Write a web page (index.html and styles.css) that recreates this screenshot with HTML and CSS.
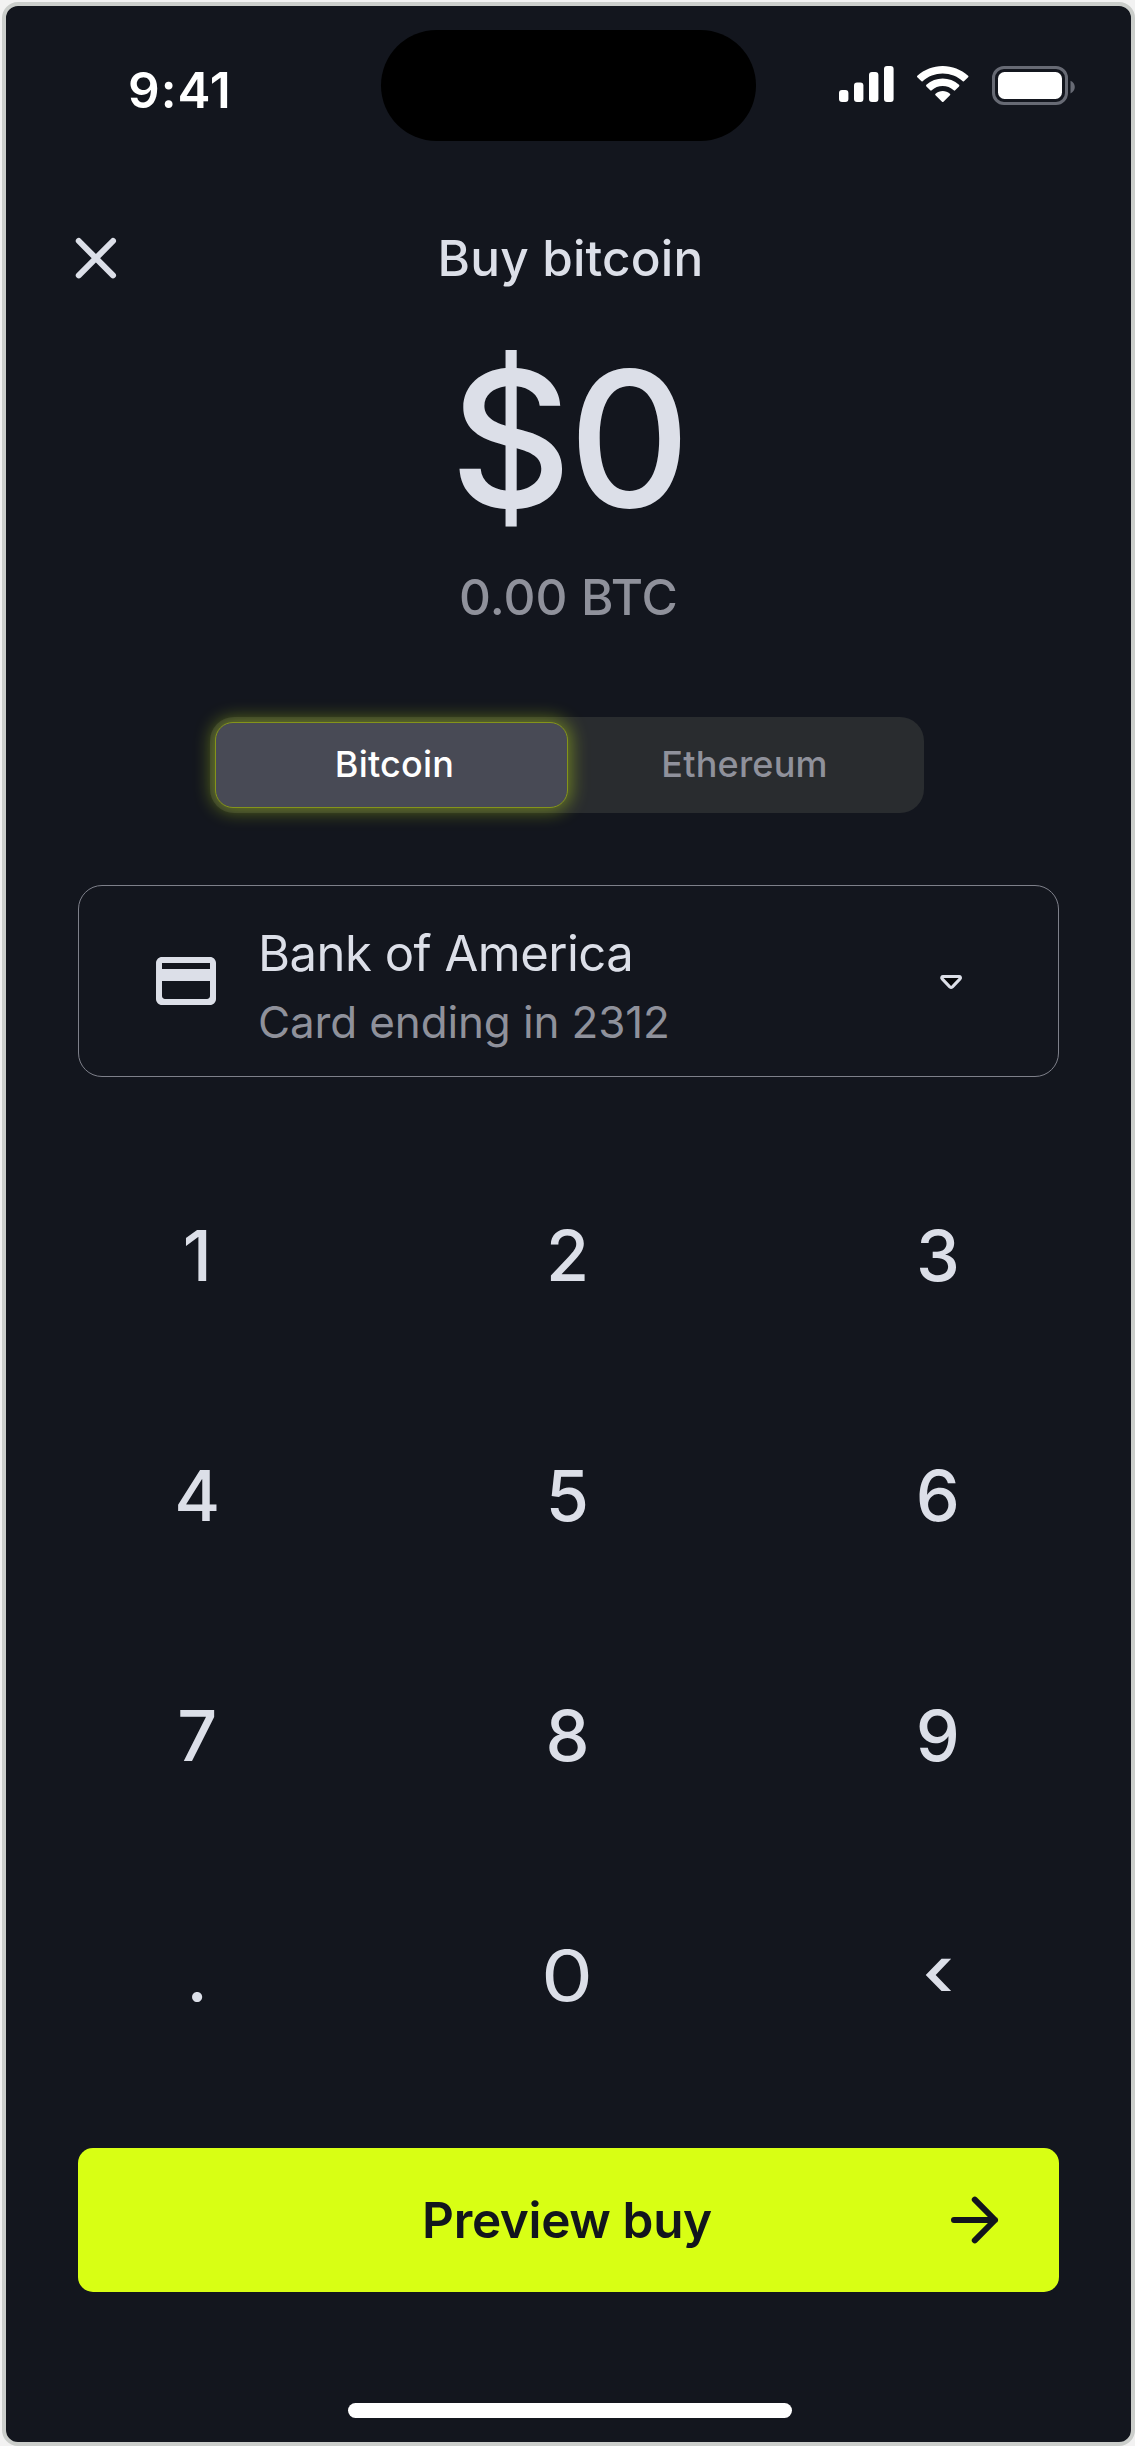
FILE: index.html
```html
<!DOCTYPE html>
<html lang="en">
<head>
<meta charset="utf-8">
<title>Buy bitcoin</title>
<link rel="stylesheet" href="styles.css">
</head>
<body>
<main class="screen">
  <div class="status">
    <div class="time">9:41</div>
    <div class="island"></div>
    <div class="indicators">
      <svg width="55" height="36" viewBox="0 0 55 36" fill="#fff">
        <rect x="0" y="24" width="9.4" height="12" rx="3"/>
        <rect x="15" y="16.5" width="9.4" height="19.5" rx="3"/>
        <rect x="30" y="6" width="9.4" height="30" rx="3"/>
        <rect x="45" y="0" width="9.6" height="36" rx="3"/>
      </svg>
      <svg width="52" height="36" viewBox="0 0 17.33 12" fill="#fff">
        <path d="M8.571 2.466C11.058 2.466 13.45 3.388 15.253 5.042C15.389 5.17 15.606 5.168 15.739 5.038L17.037 3.775C17.105 3.709 17.142 3.62 17.142 3.527C17.141 3.435 17.102 3.346 17.034 3.281C12.303-1.094 4.839-1.094.108 3.281C.04 3.346 0 3.435 0 3.527C0 3.62.037 3.709.105 3.775L1.403 5.038C1.536 5.168 1.753 5.17 1.889 5.042C3.692 3.388 6.084 2.466 8.571 2.466Z"/>
        <path d="M8.568 6.687C9.925 6.686 11.234 7.198 12.24 8.122C12.376 8.253 12.591 8.251 12.723 8.116L14.01 6.796C14.078 6.727 14.116 6.633 14.115 6.535C14.113 6.437 14.073 6.345 14.003 6.278C10.941 3.464 6.197 3.464 3.135 6.278C3.065 6.345 3.025 6.438 3.024 6.535C3.023 6.633 3.061 6.727 3.129 6.796L4.416 8.116C4.549 8.251 4.763 8.253 4.899 8.122C5.905 7.199 7.212 6.687 8.568 6.687Z"/>
        <path d="M11.092 9.48C11.094 9.582 11.055 9.68 10.984 9.75L8.818 11.893C8.754 11.956 8.668 11.992 8.578 11.992C8.488 11.992 8.402 11.956 8.338 11.893L6.172 9.75C6.101 9.68 6.062 9.582 6.064 9.48C6.066 9.379 6.109 9.282 6.183 9.214C7.566 8.045 9.59 8.045 10.973 9.214C11.047 9.282 11.09 9.379 11.092 9.48Z"/>
      </svg>
      <svg width="84" height="39" viewBox="0 0 84 39">
        <rect x="1.5" y="1.5" width="73" height="36" rx="10.5" fill="none" stroke="#676a74" stroke-width="3"/>
        <rect x="6" y="6" width="64" height="27" rx="6.5" fill="#fff"/>
        <path d="M78.5 14.8v12.6c2.7-1.2 4.3-3.6 4.3-6.3s-1.6-5.1-4.3-6.3z" fill="#676a74"/>
      </svg>
    </div>
  </div>

  <header class="header">
    <svg width="72" height="72" viewBox="0 0 72 72" fill="none" stroke="#dcdfe8" stroke-width="6" stroke-linecap="round">
      <path d="M18.8 19L53 53.4M53 19L18.8 53.4"/>
    </svg>
    <h1 class="title">Buy bitcoin</h1>
  </header>

  <div class="amount">$0</div>
  <div class="converted">0.00 BTC</div>

  <div class="segment">
    <div class="tab tab-active">Bitcoin</div>
    <div class="tab">Ethereum</div>
  </div>

  <section class="account">
    <svg width="72" height="72" viewBox="0 0 24 24" fill="#dcdfe8">
      <path d="M20 4H4c-1.11 0-1.99.89-1.99 2L2 18c0 1.11.89 2 2 2h16c1.11 0 2-.89 2-2V6c0-1.11-.89-2-2-2zm-1 14H5c-.55 0-1-.45-1-1v-5h16v5c0 .55-.45 1-1 1zm1-10H4V6h16v2z"/>
    </svg>
    <div class="account-text">
      <div class="bank">Bank of America</div>
      <div class="card-no">Card ending in 2312</div>
    </div>
    <svg width="72" height="72" viewBox="0 0 72 72" fill="#050608" stroke="#dcdfe8" stroke-width="3" stroke-linejoin="round">
      <path d="M28 31.6h16.2q2.2 0.4 0.8 2.3l-7.6 8q-1.3 1.1-2.6 0l-7.6-8q-1.4-1.9 0.8-2.3z"/>
    </svg>
  </section>

  <div class="keypad">
    <div class="key">1</div><div class="key">2</div><div class="key">3</div>
    <div class="key">4</div><div class="key">5</div><div class="key">6</div>
    <div class="key">7</div><div class="key">8</div><div class="key">9</div>
    <div class="key">.</div><div class="key"><span class="zero">0</span></div><div class="key"><span class="back">‹</span></div>
  </div>

  <div class="cta">
    <span class="cta-label">Preview buy</span>
    <svg width="72" height="72" viewBox="0 0 72 72" fill="none" stroke="#12151d" stroke-width="6" stroke-linecap="round" stroke-linejoin="round">
      <path d="M15 36H56M35.8 15.6L56 36L35.8 56.4"/>
    </svg>
  </div>

  <div class="home"></div>
</main>
</body>
</html>
```

FILE: styles.css
```css
* { box-sizing: border-box; }

body {
  margin: 0;
  padding: 2px 0 0 2px;
  width: 1135px;
  height: 2446px;
  overflow: hidden;
  background: #f2f2f2;
  font-family: Inter, "Liberation Sans", sans-serif;
  color: #dcdfe8;
}

svg { display: block; flex: none; }

.screen {
  width: 1133px;
  height: 2444px;
  border: 4px solid #cbcecb;
  border-radius: 16px;
  background: #13161e;
  display: flex;
  flex-direction: column;
  align-items: center;
}

.status {
  width: 1125px;
  height: 162px;
  display: grid;
  grid-template-columns: 375px 375px 375px;
}

.time {
  padding: 54px 0 0 122px;
  font-size: 49.5px;
  line-height: 60px;
  font-weight: 600;
  letter-spacing: 1px;
  color: #fff;
}

.island {
  height: 111px;
  margin-top: 24px;
  border-radius: 56px;
  background: #000;
}

.indicators {
  display: flex;
  align-items: flex-start;
  gap: 23px;
  padding: 60px 0 0 83px;
}

.header {
  width: 1125px;
  height: 180px;
  padding: 0 54px;
  display: grid;
  grid-template-columns: 72px 1fr 72px;
  align-items: center;
}

.title {
  margin: 0;
  padding-left: 4px;
  text-align: center;
  font-size: 49.5px;
  line-height: 60px;
  font-weight: 550;
  letter-spacing: 0.15px;
}

.amount {
  font-size: 189px;
  line-height: 181px;
  font-weight: 500;
  letter-spacing: -3.4px;
}

.converted {
  margin-top: 32px;
  font-size: 49.5px;
  line-height: 72px;
  font-weight: 550;
  letter-spacing: 0.1px;
  color: #8f919b;
}

.segment {
  width: 714px;
  height: 96px;
  margin-top: 84px;
  margin-left: -3px;
  padding: 5px;
  display: flex;
  border-radius: 24px;
  background: #292c2f;
}

.tab {
  flex: 1;
  padding-left: 2px;
  text-align: center;
  font-size: 36px;
  line-height: 84px;
  font-weight: 500;
  letter-spacing: 0.2px;
  color: #8f919b;
}

.tab-active {
  flex: 0 0 353px;
  padding-left: 6px;
  line-height: 82px;
  border: 1px solid #84941a;
  border-radius: 18px;
  background: #484a55;
  color: #fff;
  box-shadow: 0 0 18px 3px rgba(215, 255, 20, 0.4);
}

.account {
  width: 981px;
  height: 192px;
  margin-top: 72px;
  padding: 0 71px;
  display: flex;
  align-items: center;
  gap: 36px;
  border: 1px solid #7e808a;
  border-radius: 24px;
}

.account-text {
  flex: 1;
  padding-top: 14px;
  line-height: 68px;
  white-space: nowrap;
}

.bank {
  font-size: 49px;
  letter-spacing: -0.5px;
}

.card-no {
  font-size: 44px;
  letter-spacing: -0.14px;
  color: #8f919b;
}

.keypad {
  width: 1111px;
  margin-top: 59px;
  margin-right: 2px;
  display: grid;
  grid-template-columns: repeat(3, 1fr);
  grid-auto-rows: 240px;
}

.key {
  text-align: center;
  font-size: 70px;
  line-height: 240px;
  font-weight: 500;
}

.zero {
  display: inline-block;
  font-weight: 420;
  transform: scaleX(1.18);
}

.back {
  display: inline-block;
  transform: translateY(-5px) scaleX(1.15);
}

.cta {
  width: 981px;
  height: 144px;
  margin-top: 52px;
  padding: 0 48px 0 120px;
  display: flex;
  align-items: center;
  border-radius: 15px;
  background: #d8ff14;
  color: #12151d;
}

.cta-label {
  flex: 1;
  padding-right: 3px;
  text-align: center;
  font-size: 49.5px;
  line-height: 60px;
  font-weight: 600;
  letter-spacing: -0.36px;
}

.home {
  width: 444px;
  height: 15px;
  margin-top: 111px;
  margin-left: 3px;
  border-radius: 8px;
  background: #fff;
}
```
